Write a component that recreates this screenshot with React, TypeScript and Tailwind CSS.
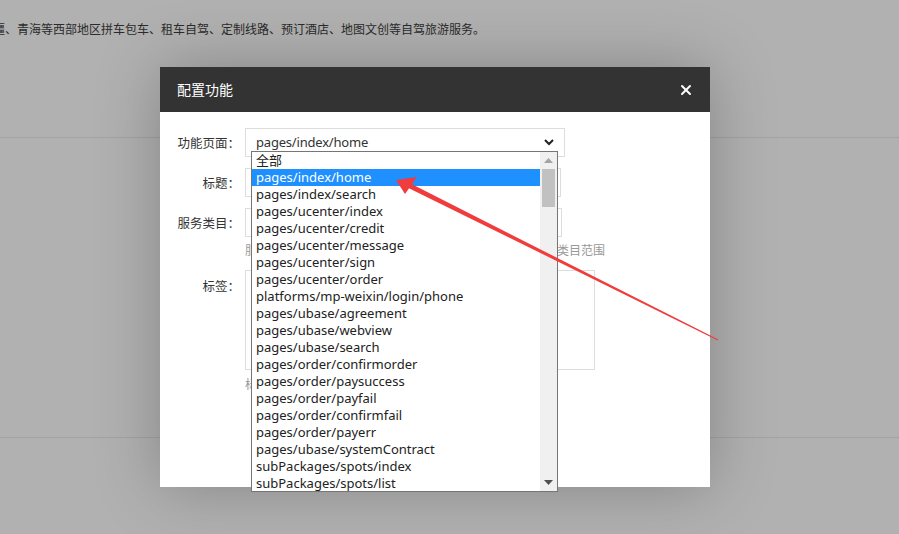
import { X } from "lucide-react"

const pages = [
  "全部",
  "pages/index/home",
  "pages/index/search",
  "pages/ucenter/index",
  "pages/ucenter/credit",
  "pages/ucenter/message",
  "pages/ucenter/sign",
  "pages/ucenter/order",
  "platforms/mp-weixin/login/phone",
  "pages/ubase/agreement",
  "pages/ubase/webview",
  "pages/ubase/search",
  "pages/order/confirmorder",
  "pages/order/paysuccess",
  "pages/order/payfail",
  "pages/order/confirmfail",
  "pages/order/payerr",
  "pages/ubase/systemContract",
  "subPackages/spots/index",
  "subPackages/spots/list",
]

const font = { fontFamily: '"Noto Sans", "Noto Sans CJK SC", sans-serif' }
const cjk = { fontFamily: '"Noto Sans CJK SC", sans-serif' }

function Label({ children, className = "" }: { children: string; className?: string }) {
  return (
    <div className={`w-[80px] shrink-0 text-right text-[12.5px] text-[#333] ${className}`} style={cjk}>
      {children}
    </div>
  )
}

function PageList() {
  return (
    <div className="absolute left-[6px] top-[23px] z-10 flex h-[341px] w-[307px] border border-[#767676] bg-white">
      <ul className="flex-1 overflow-hidden">
        {pages.map((p, i) => (
          <li
            key={p}
            className={`h-[17px] pl-[4px] text-[13px] leading-[17px] whitespace-nowrap ${
              i === 1 ? "bg-[#1e90ff] text-white" : "text-[#222]"
            }`}
          >
            {p}
          </li>
        ))}
      </ul>
      <div className="flex w-[17px] flex-col items-center bg-[#f0f0f0]">
        <div className="flex h-[17px] items-center justify-center">
          <svg width="9" height="5" viewBox="0 0 9 5">
            <path d="M0 5 L4.5 0 L9 5 Z" fill="#a3a3a3" />
          </svg>
        </div>
        <div className="h-[38px] w-[13px] bg-[#c1c1c1]" />
        <div className="flex-1" />
        <div className="flex h-[17px] items-center justify-center">
          <svg width="9" height="5" viewBox="0 0 9 5">
            <path d="M0 0 L9 0 L4.5 5 Z" fill="#505050" />
          </svg>
        </div>
      </div>
    </div>
  )
}

export default function App() {
  return (
    <div className="relative h-[534px] w-[899px] overflow-hidden bg-[#b1b1b1]" style={font}>
      <div className="flex flex-col">
        <p className="ml-[-7px] pt-[21px] text-[12px] leading-[18px] whitespace-nowrap text-[#2b2b2b]">
          疆、青海等西部地区拼车包车、租车自驾、定制线路、预订酒店、地图文创等自驾旅游服务。
        </p>
        <div className="mt-[98px] border-t border-[#a3a3a3]" />
        <div className="mt-[299px] border-t border-[#a3a3a3]" />
      </div>

      <div className="absolute left-[160px] top-[67px] flex h-[420px] w-[550px] flex-col bg-white shadow-[0_0_60px_rgba(0,0,0,0.25)]">
        <div className="flex h-[45px] items-center justify-between bg-[#333] pl-[17px] pr-[16px]">
          <span className="text-[14px] text-white">配置功能</span>
          <X className="h-[16px] w-[16px] text-white" strokeWidth={3} />
        </div>

        <div className="flex flex-col pt-[16px]">
          <div className="flex items-center">
            <Label className="pt-[2px]">功能页面：</Label>
            <div className="relative ml-[5px]">
              <div className="flex h-[29px] w-[320px] items-center justify-between border border-[#ddd] pl-[10px] pr-[10px] text-[13px] text-[#333]">
                <span className="tracking-[-0.2px]">pages/index/home</span>
                <svg width="10" height="7" viewBox="0 0 10 7">
                  <path d="M1 1 L5 5 L9 1" fill="none" stroke="#222" strokeWidth="2" />
                </svg>
              </div>
              <PageList />
            </div>
          </div>

          <div className="mt-[11px] flex items-center">
            <Label className="pt-[2px]">标题：</Label>
            <div className="ml-[5px] h-[29px] w-[316px] border border-[#ddd]" />
          </div>

          <div className="mt-[11px] flex items-center">
            <Label className="pt-[2px]">服务类目：</Label>
            <div className="ml-[5px] h-[29px] w-[317px] border border-[#ddd]" />
          </div>
          <div className="mt-[6px] flex">
            <div className="w-[85px] shrink-0" />
            <span className="text-[12px] leading-[16px] whitespace-nowrap text-[#999]">
              服务类目用于限定该页面可使用的服务，留空则不限制服务类目范围
            </span>
          </div>

          <div className="mt-[11px] flex items-start">
            <Label className="pt-[7px]">标签：</Label>
            <div className="ml-[5px] h-[100px] w-[350px] border border-[#ddd]" />
          </div>
          <div className="mt-[7px] flex">
            <div className="w-[85px] shrink-0" />
            <span className="text-[12px] leading-[16px] text-[#999]">标签之间用逗号分隔</span>
          </div>
        </div>
      </div>

      <svg className="pointer-events-none absolute left-0 top-0 z-20" width="899" height="534" viewBox="0 0 899 534">
        <polygon points="406.9,187.2 409.1,182.8 718.3,339.6 717.8,340.4" fill="#f03c3c" />
        <polygon points="396,180 417,177 405,194" fill="#f03c3c" />
      </svg>
    </div>
  )
}
